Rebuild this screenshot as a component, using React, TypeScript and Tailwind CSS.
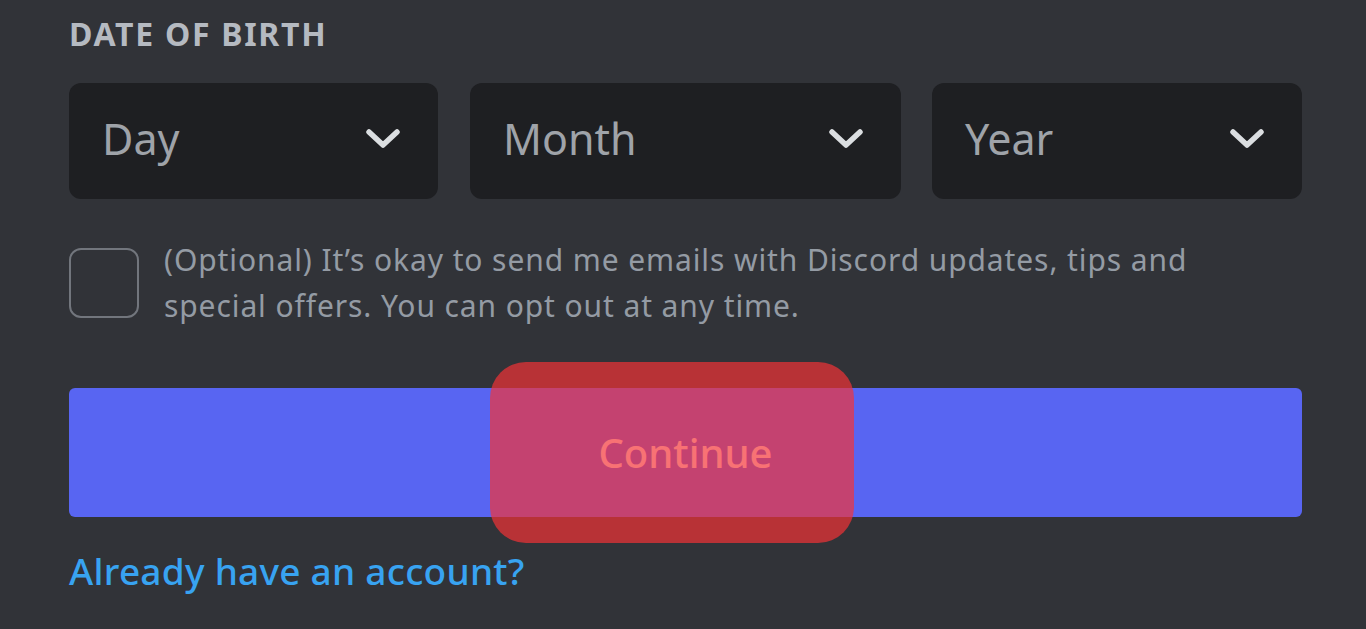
import React from 'react';

const FONT = "font-['Noto_Sans',sans-serif]";

function Chevron() {
  return (
    <svg width="36" height="20" viewBox="0 0 36 20" fill="none" className="shrink-0">
      <path d="M4 3 L18 16 L32 3" stroke="#dbdee1" strokeWidth="5.5" strokeLinecap="round" strokeLinejoin="round" />
    </svg>
  );
}

function Select({ label, width }: { label: string; width: string }) {
  return (
    <div className={`${width} h-[116px] rounded-[12px] bg-[#1e1f22] flex items-center justify-between pl-[33px] pr-[37px] pb-[5px]`}>
      <span className="text-[43px] leading-none text-[#9fa3a9]">{label}</span>
      <Chevron />
    </div>
  );
}

export default function App() {
  return (
    <div className={`relative w-[1366px] h-[629px] overflow-hidden bg-[#313338] ${FONT}`}>
      <div className="ml-[69px] w-[1233px] pt-[18px] flex flex-col">
        {/* Date of birth */}
        <div className="text-[32px] leading-[32px] font-bold uppercase tracking-[1.7px] text-[#b5bac1]">Date of birth</div>

        <div className="mt-[33px] flex gap-[31px]">
          <Select label="Day" width="w-[369px]" />
          <div className="ml-[1px]">
            <Select label="Month" width="w-[431px]" />
          </div>
          <Select label="Year" width="w-[370px]" />
        </div>

        {/* Opt-in checkbox */}
        <div className="mt-[38px] flex items-start gap-[25px]">
          <div className="mt-[11px] w-[70px] h-[70px] shrink-0 rounded-[12px] border-2 border-[#72767d]" />
          <p className="text-[30px] leading-[46px] tracking-[0.9px] text-[#949ba4]">
            (Optional) It’s okay to send me emails with Discord updates, tips and
            <br />
            special offers. You can opt out at any time.
          </p>
        </div>

        <button className="mt-[59px] h-[129px] w-full rounded-[6px] bg-[#5865f2] text-[40px] font-medium text-white">
          Continue
        </button>

        <a className="mt-[30px] self-start text-[37px] leading-[48px] font-medium tracking-[0.25px] text-[#38a3f1]">
          Already have an account?
        </a>
      </div>

      {/* highlight overlay */}
      <div className="absolute left-[490px] top-[362px] w-[364px] h-[181px] rounded-[36px] bg-[rgba(245,50,53,0.69)] pointer-events-none" />
    </div>
  );
}
